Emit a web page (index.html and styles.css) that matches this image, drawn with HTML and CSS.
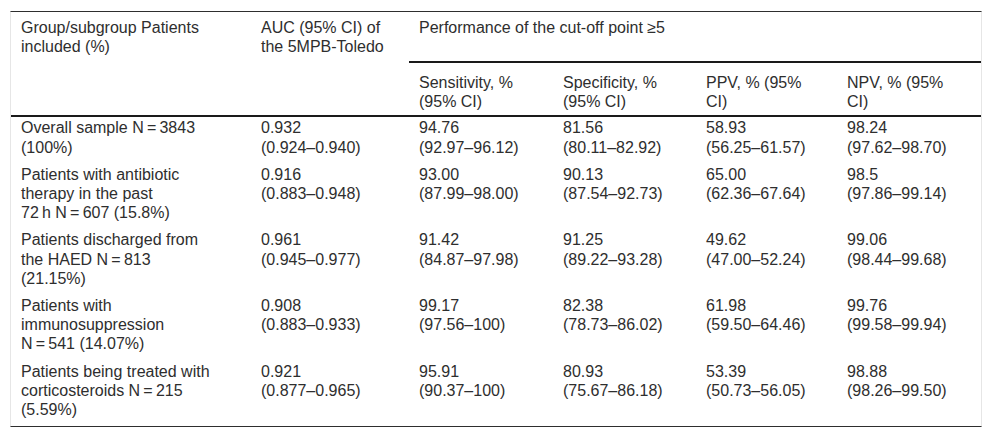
FILE: index.html
```html
<!DOCTYPE html>
<html lang="en">
<head>
<meta charset="utf-8">
<title>5MPB-Toledo performance</title>
<link rel="stylesheet" href="styles.css">
</head>
<body>
<div class="wrap">
<table class="data">
  <colgroup>
    <col class="c1"><col class="c2"><col class="c3"><col class="c4"><col class="c5"><col class="c6">
  </colgroup>
  <thead>
    <tr class="h1">
      <th rowspan="2" class="first">Group/subgroup Patients included (%)</th>
      <th rowspan="2">AUC (95% CI) of the 5MPB-Toledo</th>
      <th colspan="4" class="perf">Performance of the cut-off point ≥5</th>
    </tr>
    <tr class="h2">
      <th>Sensitivity, % (95% CI)</th>
      <th>Specificity, % (95% CI)</th>
      <th>PPV, % (95% CI)</th>
      <th>NPV, % (95% CI)</th>
    </tr>
  </thead>
  <tbody>
    <tr>
      <td class="first">Overall sample N&#8288;&#8201;&#8288;=&#8288;&#8201;&#8288;3843 (100%)</td>
      <td><span class="v">0.932</span><span class="v">(0.924–0.940)</span></td>
      <td><span class="v">94.76</span><span class="v">(92.97–96.12)</span></td>
      <td><span class="v">81.56</span><span class="v">(80.11–82.92)</span></td>
      <td><span class="v">58.93</span><span class="v">(56.25–61.57)</span></td>
      <td><span class="v">98.24</span><span class="v">(97.62–98.70)</span></td>
    </tr>
    <tr>
      <td class="first">Patients with antibiotic therapy in the past 72&#8288;&#8201;&#8288;h&nbsp;N&#8288;&#8201;&#8288;=&#8288;&#8201;&#8288;607 (15.8%)</td>
      <td><span class="v">0.916</span><span class="v">(0.883–0.948)</span></td>
      <td><span class="v">93.00</span><span class="v">(87.99–98.00)</span></td>
      <td><span class="v">90.13</span><span class="v">(87.54–92.73)</span></td>
      <td><span class="v">65.00</span><span class="v">(62.36–67.64)</span></td>
      <td><span class="v">98.5</span><span class="v">(97.86–99.14)</span></td>
    </tr>
    <tr>
      <td class="first">Patients discharged from the HAED N&#8288;&#8201;&#8288;=&#8288;&#8201;&#8288;813 (21.15%)</td>
      <td><span class="v">0.961</span><span class="v">(0.945–0.977)</span></td>
      <td><span class="v">91.42</span><span class="v">(84.87–97.98)</span></td>
      <td><span class="v">91.25</span><span class="v">(89.22–93.28)</span></td>
      <td><span class="v">49.62</span><span class="v">(47.00–52.24)</span></td>
      <td><span class="v">99.06</span><span class="v">(98.44–99.68)</span></td>
    </tr>
    <tr>
      <td class="first">Patients with immunosuppression N&#8288;&#8201;&#8288;=&#8288;&#8201;&#8288;541 (14.07%)</td>
      <td><span class="v">0.908</span><span class="v">(0.883–0.933)</span></td>
      <td><span class="v">99.17</span><span class="v">(97.56–100)</span></td>
      <td><span class="v">82.38</span><span class="v">(78.73–86.02)</span></td>
      <td><span class="v">61.98</span><span class="v">(59.50–64.46)</span></td>
      <td><span class="v">99.76</span><span class="v">(99.58–99.94)</span></td>
    </tr>
    <tr>
      <td class="first">Patients being treated with corticosteroids N&#8288;&#8201;&#8288;=&#8288;&#8201;&#8288;215 (5.59%)</td>
      <td><span class="v">0.921</span><span class="v">(0.877–0.965)</span></td>
      <td><span class="v">95.91</span><span class="v">(90.37–100)</span></td>
      <td><span class="v">80.93</span><span class="v">(75.67–86.18)</span></td>
      <td><span class="v">53.39</span><span class="v">(50.73–56.05)</span></td>
      <td><span class="v">98.88</span><span class="v">(98.26–99.50)</span></td>
    </tr>
  </tbody>
</table>
</div>
</body>
</html>
```

FILE: styles.css
```css
html, body {
  margin: 0;
  padding: 0;
  background: #ffffff;
}

.wrap {
  padding: 11px 10px 0 10px;
}

.data {
  width: 972px;
  table-layout: fixed;
  border-collapse: separate;
  border-spacing: 0;
  border-top: 1px solid #2e2e2e;
  border-bottom: 1px solid #2e2e2e;
  border-left: 1px solid #e6e6e6;
  border-right: 1px solid #e6e6e6;
  font-family: "Liberation Sans", Arial, sans-serif;
  font-size: 16px;
  line-height: 19.2px;
  color: #2e2e2e;
}

.c1 { width: 240px; }
.c2 { width: 158px; }
.c3 { width: 144px; }
.c4 { width: 143px; }
.c5 { width: 141px; }
.c6 { width: 144px; }

.data th {
  font-weight: normal;
  text-align: left;
  vertical-align: top;
}

.h1 th {
  height: 43px;
  padding: 6px 14px 0 10px;
}

.h1 th[rowspan] {
  border-bottom: 2px solid #1a1a1a;
}

.h1 th.perf {
  border-bottom: 2px solid #1a1a1a;
}

.h2 th {
  padding: 10px 14px 4px 10px;
  border-bottom: 2px solid #1a1a1a;
}

.data td {
  text-align: left;
  vertical-align: top;
  padding: 1px 14px 7px 10px;
}

.data .first {
  padding-right: 34px;
}

.v {
  display: block;
}
```
